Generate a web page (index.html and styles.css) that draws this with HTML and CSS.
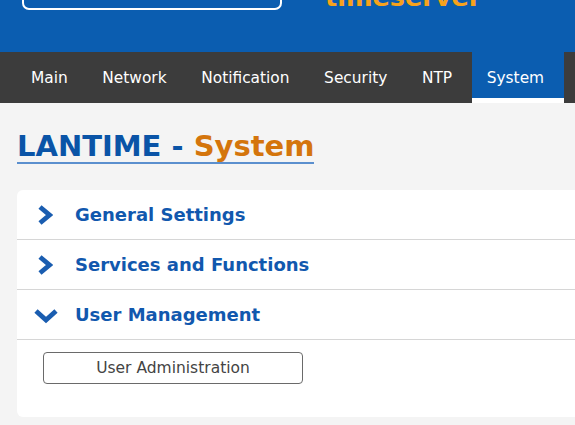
FILE: index.html
```html
<!DOCTYPE html>
<html>
<head>
<meta charset="utf-8">
<link rel="stylesheet" href="styles.css">
</head>
<body>
<header class="top">
  <div class="brand">
    <div class="logo-box"></div>
    <div class="brand-title">timeserver</div>
  </div>
</header>
<nav class="nav">
  <a class="tab">Main</a>
  <a class="tab">Network</a>
  <a class="tab">Notification</a>
  <a class="tab">Security</a>
  <a class="tab">NTP</a>
  <a class="tab active">System</a>
</nav>
<main class="content">
  <h1 class="title"><span class="t-blue">LANTIME - </span><span class="t-orange">System</span></h1>
  <section class="card">
    <div class="row">
      <svg class="chev-r" width="16" height="22" viewBox="0 0 16 22"><polyline points="3,3 12.5,11 3,19" fill="none" stroke="#1a5db0" stroke-width="4.8" stroke-linejoin="miter"/></svg>
      <span class="row-label">General Settings</span>
    </div>
    <div class="row">
      <svg class="chev-r" width="16" height="22" viewBox="0 0 16 22"><polyline points="3,3 12.5,11 3,19" fill="none" stroke="#1a5db0" stroke-width="4.8" stroke-linejoin="miter"/></svg>
      <span class="row-label">Services and Functions</span>
    </div>
    <div class="row">
      <svg class="chev-d" width="26" height="16" viewBox="0 0 26 16"><polyline points="3,3 13,12 23,3" fill="none" stroke="#1a5db0" stroke-width="4.8" stroke-linejoin="miter"/></svg>
      <span class="row-label">User Management</span>
    </div>
    <div class="panel">
      <button class="btn">User Administration</button>
    </div>
  </section>
</main>
</body>
</html>
```
FILE: styles.css
```css
html, body {
  margin: 0;
  padding: 0;
  overflow: hidden;
  background: #f4f4f4;
  font-family: "DejaVu Sans", Verdana, sans-serif;
}
.top {
  height: 52px;
  background: #0b5db0;
  overflow: hidden;
}
.brand {
  height: 10px;
  display: flex;
  align-items: flex-end;
  padding-left: 22px;
}
.logo-box {
  width: 256px;
  height: 60px;
  border: 2px solid #ffffff;
  border-radius: 7px;
  flex: none;
}
.brand-title {
  margin-left: 43px;
  font-weight: bold;
  font-size: 25.5px;
  line-height: 24px;
  color: #f7a21c;
  margin-bottom: 1px;
  flex: none;
}
.nav {
  height: 51px;
  background: #3c3c3c;
  display: flex;
  padding-left: 16px;
}
.tab {
  display: flex;
  align-items: center;
  padding: 0 19.6px 0 15px;
  color: #ffffff;
  font-size: 15.4px;
  box-sizing: border-box;
  height: 51px;
  padding-top: 1px;
}
.tab.active {
  background: #0b5db0;
  border-bottom: 5px solid #ffffff;
  padding-top: 6px;
}
.content {
  padding-left: 17px;
}
.title {
  display: inline-block;
  margin: 28px 0 0 0;
  font-size: 29px;
  line-height: 30px;
  font-weight: bold;
  padding-bottom: 1px;
  border-bottom: 2px solid #5b8fce;
}
.t-blue { color: #0a54a7; }
.t-orange { color: #d4750c; }
.card {
  margin-top: 26px;
  width: 640px;
  background: #ffffff;
  border-radius: 6px;
}
.row {
  height: 49px;
  display: flex;
  align-items: center;
  border-bottom: 1px solid #d6d6d6;
  padding-left: 20px;
}
.chev-r {
  flex: none;
  margin-right: 22px;
}
.chev-d {
  flex: none;
  margin-left: -4px;
  margin-right: 16px;
  margin-top: 2px;
}
.row-label {
  font-weight: bold;
  font-size: 18px;
  color: #1158ae;
}
.panel {
  padding: 12px 0 33px 26px;
}
.btn {
  width: 260px;
  height: 32px;
  background: #ffffff;
  border: 1px solid #6a6a6a;
  border-radius: 4px;
  font-family: "DejaVu Sans", Verdana, sans-serif;
  font-size: 15.5px;
  color: #444444;
  padding: 0;
}
```
